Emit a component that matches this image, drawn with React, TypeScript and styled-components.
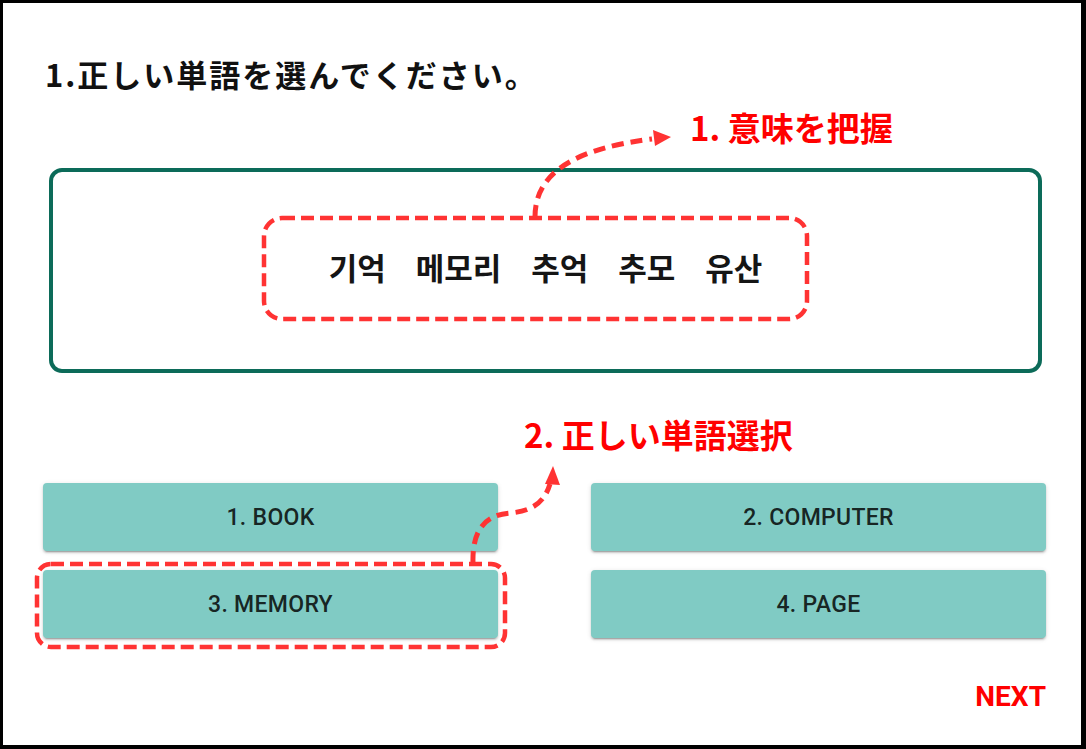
import React from "react";
import styled, { createGlobalStyle } from "styled-components";

const GlobalStyle = createGlobalStyle`
  html, body {
    margin: 0;
    padding: 0;
    background: #fff;
  }
`;

const Stage = styled.div`
  position: relative;
  width: 1086px;
  height: 749px;
  overflow: hidden;
`;

const Frame = styled.div`
  box-sizing: border-box;
  width: 1086px;
  height: 749px;
  border-style: solid;
  border-color: #000;
  border-width: 3px 5px 4px 3px;
  background: #fff;
  display: flex;
  flex-direction: column;
  padding: 0 35px 0 40px;
  font-family: "Noto Sans CJK JP", "Noto Sans", sans-serif;
`;

const Title = styled.h1`
  margin: 55px 0 0 2px;
  font-size: 31px;
  line-height: 31px;
  font-weight: 700;
  letter-spacing: 2px;
  color: #111;
`;

const Note = styled.div<{ $indent: number; $top: number }>`
  margin: ${(p) => p.$top}px 0 0 ${(p) => p.$indent}px;
  font-size: 33px;
  line-height: 33px;
  font-weight: 700;
  color: #ff0000;
  white-space: nowrap;
`;

const WordBox = styled.div`
  box-sizing: border-box;
  margin: 24px 0 0 6px;
  width: 993px;
  height: 205px;
  padding-bottom: 9px;
  border: 4px solid #0c6b59;
  border-radius: 13px;
  display: flex;
  align-items: center;
  justify-content: center;
  gap: 30px;
`;

const Word = styled.span`
  font-family: "Noto Sans CJK KR", "Noto Sans", sans-serif;
  font-size: 31px;
  line-height: 1;
  font-weight: 700;
  color: #151515;
`;

const ChoiceGrid = styled.div`
  margin-top: 32px;
  display: grid;
  grid-template-columns: 455px 455px;
  grid-auto-rows: 68px;
  column-gap: 93px;
  row-gap: 19px;
`;

const Choice = styled.button`
  border: none;
  border-radius: 4px;
  background: #80cbc4;
  box-shadow: 0 3px 1px -2px rgba(0, 0, 0, 0.2), 0 2px 2px 0 rgba(0, 0, 0, 0.14),
    0 1px 5px 0 rgba(0, 0, 0, 0.12);
  font-family: Roboto, "Liberation Sans", sans-serif;
  font-size: 23px;
  font-weight: 500;
  letter-spacing: 0.3px;
  color: rgba(0, 0, 0, 0.84);
  text-transform: uppercase;
  cursor: pointer;
`;

const NextButton = styled.button`
  align-self: flex-end;
  margin-top: 45px;
  padding: 0;
  border: none;
  background: none;
  font-family: Roboto, "Liberation Sans", sans-serif;
  font-size: 28px;
  line-height: 28px;
  font-weight: 700;
  color: #ff0000;
  cursor: pointer;
`;

const Overlay = styled.svg`
  position: absolute;
  inset: 0;
  pointer-events: none;
`;

const words = ["기억", "메모리", "추억", "추모", "유산"];
const choices = ["1. BOOK", "2. COMPUTER", "3. MEMORY", "4. PAGE"];

export default function App(): JSX.Element {
  return (
    <>
      <GlobalStyle />
      <Stage>
        <Frame>
          <Title>1.正しい単語を選んでください。</Title>
          <Note $indent={647} $top={22}>
            1. 意味を把握
          </Note>
          <WordBox>
            {words.map((w) => (
              <Word key={w}>{w}</Word>
            ))}
          </WordBox>
          <Note $indent={481} $top={45}>
            2. 正しい単語選択
          </Note>
          <ChoiceGrid>
            {choices.map((c) => (
              <Choice key={c}>{c}</Choice>
            ))}
          </ChoiceGrid>
          <NextButton>NEXT</NextButton>
        </Frame>
        <Overlay width={1086} height={749} viewBox="0 0 1086 749">
          <g fill="none" stroke="#ff3333" strokeWidth={4.5}>
            <rect x={264} y={218} width={543} height={101} rx={18} strokeDasharray="13 6" />
            <rect x={37} y={564} width={468} height={83} rx={14} strokeDasharray="13 6" />
            <path d="M535 217 C535 170 580 148 652 139" strokeWidth={5} strokeDasharray="12 7" />
            <path d="M473 563 C472 530 485 515 510 513 C535 511 545 500 550 484" strokeWidth={5} strokeDasharray="12 7" />
          </g>
          <g fill="#ff3333">
            <polygon points="671,137 653,130 655,146" />
            <polygon points="553,466 545,484 560,485" />
          </g>
        </Overlay>
      </Stage>
    </>
  );
}
